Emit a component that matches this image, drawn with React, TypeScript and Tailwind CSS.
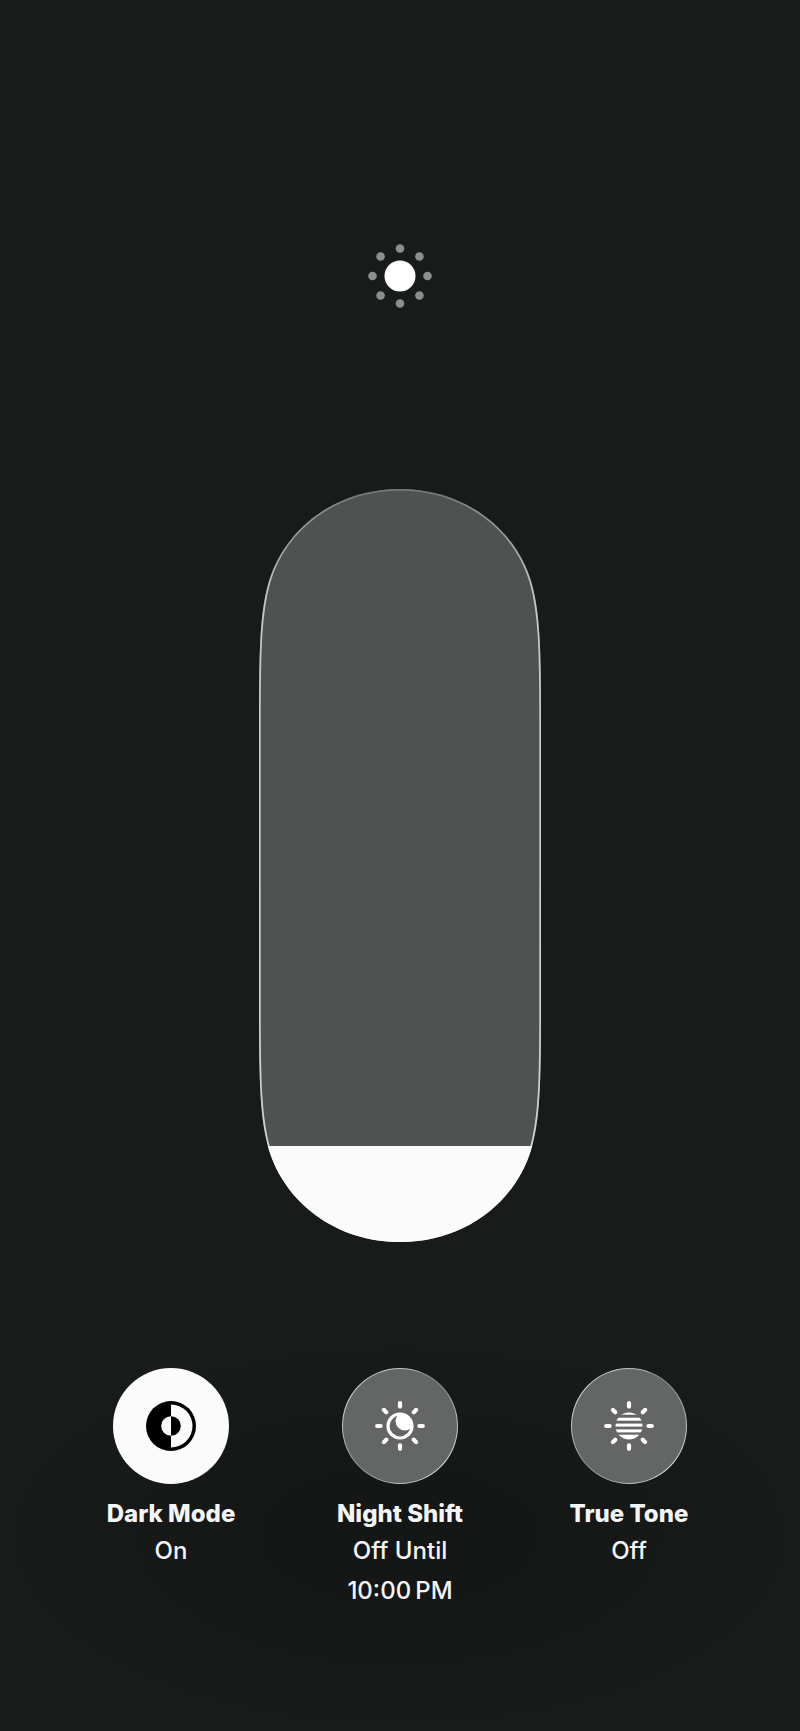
import { useState } from "react";
import type { ReactNode } from "react";

const RAYS = [0, 45, 90, 135, 180, 225, 270, 315];

const TRACK_PATH =
  "M0 230 C0 160 1 122 10 92 C26 40 76 0 141 0 C206 0 256 40 272 92 C281 122 282 160 282 230 V523 C282 593 281 631 272 661 C256 713 206 753 141 753 C76 753 26 713 10 661 C1 631 0 593 0 523 Z";

function SunIcon() {
  return (
    <svg viewBox="-32 -32 64 64" className="size-16" aria-hidden="true">
      <circle r="15.5" fill="#fff" />
      {RAYS.map((a) => (
        <circle key={a} cy="-27.5" r="4.3" fill="#8d8f8e" transform={`rotate(${a})`} />
      ))}
    </svg>
  );
}

function Rays() {
  return (
    <g stroke="#fff" strokeWidth="4.2" strokeLinecap="round">
      {RAYS.map((a) => (
        <line key={a} y1="-22.8" y2="-19.4" transform={`rotate(${a})`} />
      ))}
    </g>
  );
}

function DarkModeIcon() {
  return (
    <svg viewBox="-26 -26 52 52" className="size-13" aria-hidden="true">
      <circle r="25" fill="#000" />
      <path d="M0 -21.5 A21.5 21.5 0 0 1 0 21.5 Z" fill="#fbfbfb" />
      <path d="M0 -9.8 A9.8 9.8 0 0 0 0 9.8 Z" fill="#fbfbfb" />
      <path d="M0 -9.8 A9.8 9.8 0 0 1 0 9.8 Z" fill="#000" />
    </svg>
  );
}

function NightShiftIcon() {
  return (
    <svg viewBox="-26 -26 52 52" className="size-13" aria-hidden="true">
      <Rays />
      <circle r="12" fill="none" stroke="#fff" strokeWidth="3.2" />
      <clipPath id="moon-disc">
        <circle r="12" />
      </clipPath>
      <circle cx="4.8" cy="-4.8" r="9.2" fill="#fff" clipPath="url(#moon-disc)" />
    </svg>
  );
}

function TrueToneIcon() {
  return (
    <svg viewBox="-26 -26 52 52" className="size-13" aria-hidden="true">
      <Rays />
      <clipPath id="tone-disc">
        <circle r="13.5" />
      </clipPath>
      <g fill="#fff" clipPath="url(#tone-disc)">
        <rect x="-14" y="-14" width="28" height="2.7" />
        <rect x="-14" y="-8.3" width="28" height="3" />
        <rect x="-14" y="-2.4" width="28" height="3" />
        <rect x="-14" y="3.4" width="28" height="3" />
        <rect x="-14" y="8.7" width="28" height="6" />
      </g>
    </svg>
  );
}

function BrightnessSlider() {
  const [level, setLevel] = useState(12.75);
  const fillTop = 753 * (1 - level / 100);
  return (
    <div className="relative w-[282px]">
      <svg viewBox="0 0 282 753" className="block w-full overflow-visible" aria-hidden="true">
        <defs>
          <clipPath id="track">
            <path d={TRACK_PATH} />
          </clipPath>
          <linearGradient id="rim" x1="0" y1="0" x2="0" y2="1">
            <stop offset="0" stopColor="#747675" />
            <stop offset="0.03" stopColor="#8a8c8b" />
            <stop offset="0.14" stopColor="#c6c8c7" />
            <stop offset="1" stopColor="#d2d4d3" />
          </linearGradient>
        </defs>
        <g clipPath="url(#track)">
          <rect width="282" height="753" fill="#505251" />
          <path d={TRACK_PATH} fill="none" stroke="url(#rim)" strokeWidth="3.4" />
          <rect y={fillTop} width="282" height="753" fill="#fbfbfb" />
        </g>
      </svg>
      <input
        type="range"
        aria-label="Brightness"
        min="0"
        max="100"
        step="0.25"
        value={level}
        onChange={(e) => setLevel(Number(e.target.value))}
        className="absolute inset-0 h-full w-full cursor-pointer opacity-0 [direction:rtl] [writing-mode:vertical-lr]"
      />
    </div>
  );
}

type ToggleProps = { name: string; status: string[]; on?: boolean; children: ReactNode };

function Toggle({ name, status, on = false, children }: ToggleProps) {
  return (
    <button
      type="button"
      aria-pressed={on}
      className="flex w-[229px] cursor-pointer flex-col items-center text-center text-2xl font-medium text-[#f4f5f5]"
    >
      {on ? (
        <span className="flex size-29 items-center justify-center rounded-full bg-[#fbfbfb]">{children}</span>
      ) : (
        <span className="flex size-29 rounded-full bg-linear-135 from-[#f4f6f5] via-[#8e908f] to-[#f4f6f5] p-px">
          <span className="flex flex-1 items-center justify-center rounded-full bg-[#646665]">{children}</span>
        </span>
      )}
      <span className="mt-[13px] leading-[34px] font-extrabold">{name}</span>
      {status.map((line) => (
        <span key={line} className="leading-10">
          {line}
        </span>
      ))}
    </button>
  );
}

export default function App() {
  return (
    <main className="flex min-h-screen flex-col items-center bg-[#171b1a] pt-61 font-[Inter,'Liberation_Sans',sans-serif]">
      <SunIcon />
      <div className="mt-[181px]">
        <BrightnessSlider />
      </div>
      <section
        aria-label="Display options"
        className="flex w-full flex-1 justify-center bg-[radial-gradient(ellipse_50%_40%_at_50%_60%,#141716_30%,#171b1a_100%)] pt-[126px] pb-24"
      >
        <Toggle name="Dark Mode" status={["On"]} on>
          <DarkModeIcon />
        </Toggle>
        <Toggle name="Night Shift" status={["Off Until", "10:00\u2009PM"]}>
          <NightShiftIcon />
        </Toggle>
        <Toggle name="True Tone" status={["Off"]}>
          <TrueToneIcon />
        </Toggle>
      </section>
    </main>
  );
}
